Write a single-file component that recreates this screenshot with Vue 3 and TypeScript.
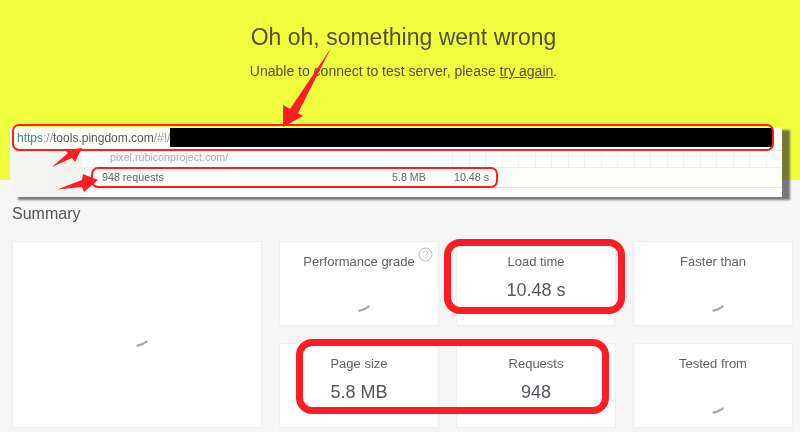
<script setup lang="ts">
interface Stat {
  label: string;
  value?: string;
  hint?: boolean;
}

const stats: Stat[] = [
  { label: "Performance grade", hint: true },
  { label: "Load time", value: "10.48 s" },
  { label: "Faster than" },
  { label: "Page size", value: "5.8 MB" },
  { label: "Requests", value: "948" },
  { label: "Tested from" },
];

const gridCells: number[] = Array.from({ length: 20 }, (_, i) => i);
</script>

<template>
  <div class="page">
    <header class="hero">
      <h1>Oh oh, something went wrong</h1>
      <p>Unable to connect to test server, please <a>try again</a>.</p>
    </header>

    <main class="content">
      <h2>Summary</h2>
      <section class="grid">
        <div class="card big">
          <svg class="spin" width="12" height="7" viewBox="0 0 12 7">
            <path d="M1.5 5.6 C4.5 5.3 7.5 4 10.5 1.6" />
          </svg>
        </div>
        <div v-for="s in stats" :key="s.label" class="card">
          <div class="label">
            {{ s.label }}
            <svg v-if="s.hint" class="hint" width="15" height="15" viewBox="0 0 15 15">
              <circle cx="7.5" cy="7.5" r="6.5" />
              <path d="M5.6 6 C5.6 3.6 9.5 3.6 9.5 6 C9.5 7.6 7.5 7.4 7.5 9" />
              <path d="M7.5 10.2 V11.4" />
            </svg>
          </div>
          <div v-if="s.value" class="value">{{ s.value }}</div>
          <svg v-else class="spin small" width="12" height="7" viewBox="0 0 12 7">
            <path d="M1.5 5.6 C4.5 5.3 7.5 4 10.5 1.6" />
          </svg>
        </div>
      </section>
    </main>

    <!-- pasted screenshot lying over the page -->
    <figure class="shot">
      <div class="url">
        <span class="scheme">https</span><span class="dim">://</span>tools.pingdom.com<span class="dim">/#!/</span>
        <span class="redacted"></span>
      </div>
      <div class="rows">
        <div class="side"></div>
        <div class="table">
          <div class="row-a">
            <span class="host">pixel.rubiconproject.com/</span>
            <div class="ticks">
              <i v-for="c in gridCells" :key="c"></i>
            </div>
          </div>
          <div class="row-b">
            <span class="req">948 requests</span>
            <span class="size">5.8 MB</span>
            <span class="time">10.48 s</span>
          </div>
        </div>
      </div>
    </figure>

    <!-- hand-drawn annotations -->
    <div class="mark m-url"></div>
    <div class="mark m-req"></div>
    <div class="mark thick m-load"></div>
    <div class="mark thick m-size"></div>
    <svg class="arrows" width="800" height="432" viewBox="0 0 800 432">
      <path d="M331 48 L298 113 L303 116 L283 127 L283 105 L290 109 Z" />
      <path d="M52 167 L68 153 L65 150 L82 148 L75 162 L72 158 Z" />
      <path d="M57 189.5 L82 180 L83 174 L98 180 L84 192 L82 187 Z" />
    </svg>
  </div>
</template>

<style>
html,
body {
  margin: 0;
}
</style>

<style scoped>
.page {
  position: relative;
  width: 800px;
  height: 432px;
  overflow: hidden;
  background: #f6f6f6;
  font-family: "Liberation Sans", Arial, sans-serif;
  color: #555;
  filter: blur(0.5px);
}

.hero {
  height: 180px;
  box-sizing: border-box;
  padding-top: 23px;
  background: #efff3e;
  text-align: center;
  color: #50522f;
}

.hero h1 {
  margin: 0;
  padding-left: 7px;
  font-size: 23px;
  line-height: 28px;
  font-weight: 400;
}

.hero p {
  margin: 12px 0 0;
  padding-left: 7px;
  font-size: 14px;
  line-height: 16px;
}

.hero a {
  text-decoration: underline;
}

.content {
  padding: 25px 7px 0 12px;
}

.content h2 {
  margin: 0;
  font-size: 16px;
  line-height: 18px;
  font-weight: 400;
  color: #555;
}

.grid {
  display: grid;
  grid-template-columns: 250px 160px 160px 160px;
  grid-template-rows: 85px 85px;
  column-gap: 17px;
  row-gap: 17px;
  margin-top: 18px;
}

.card {
  position: relative;
  display: flex;
  flex-direction: column;
  align-items: center;
  box-sizing: border-box;
  padding-top: 12px;
  background: #fff;
  border: 1px solid #eeeeee;
  border-radius: 2px;
}

.big {
  grid-row: span 2;
  justify-content: center;
  padding-top: 18px;
}

.label {
  position: relative;
  font-size: 13px;
  line-height: 15px;
  color: #62626a;
}

.hint {
  position: absolute;
  top: -7px;
  right: -18px;
  fill: none;
  stroke: #bdbdbd;
  stroke-width: 1;
}

.value {
  margin-top: 10px;
  font-size: 18px;
  line-height: 22px;
  color: #55555c;
}

.spin {
  margin-left: 9px;
  fill: none;
  stroke: #a9a9a9;
  stroke-width: 2.4;
  stroke-linecap: round;
}

.small {
  margin-top: 36px;
}

.shot {
  position: absolute;
  left: 10px;
  top: 127px;
  width: 772px;
  height: 70px;
  margin: 0;
  background: #fdfdf9;
  box-shadow: 8px 3px 2px rgba(50, 50, 50, 0.65);
}

.url {
  display: flex;
  align-items: center;
  box-sizing: border-box;
  height: 23px;
  padding: 0 0 2px 7px;
  font-size: 12px;
  color: #555;
  white-space: pre;
}

.scheme {
  color: #3f8f6c;
}

.dim {
  color: #999;
}

.redacted {
  position: absolute;
  left: 160px;
  right: 9px;
  top: 1px;
  height: 19px;
  background: #000;
}

.rows {
  display: flex;
  height: 47px;
  border-top: 1px solid #e2e2de;
  box-sizing: border-box;
}

.side {
  width: 72px;
  background: #f4f4f0;
}

.table {
  flex: 1;
  font-size: 10.7px;
}

.row-a {
  position: relative;
  height: 16px;
  border-bottom: 1px solid #eeeeea;
}

.host {
  position: absolute;
  left: 28px;
  top: 0;
  color: #aaa;
}

.ticks {
  position: absolute;
  right: 0;
  top: 2px;
  bottom: 0;
  display: flex;
}

.ticks i {
  display: block;
  box-sizing: border-box;
  width: 16.5px;
  border-left: 1px solid #f0f0ec;
}

.row-b {
  position: relative;
  height: 19px;
  border-bottom: 1px solid #e2e2e2;
  line-height: 18px;
  color: #666;
}

.req {
  position: absolute;
  left: 20px;
}

.size {
  position: absolute;
  left: 310px;
}

.time {
  position: absolute;
  left: 372px;
}

.mark {
  position: absolute;
  box-sizing: border-box;
  border: 2px solid #ff1d25;
  border-radius: 7px;
}

.thick {
  border-width: 7.5px;
  border-radius: 16px;
}

.m-url {
  left: 12px;
  top: 124px;
  width: 762px;
  height: 27px;
}

.m-req {
  left: 91px;
  top: 167px;
  width: 407px;
  height: 21px;
}

.m-load {
  left: 444px;
  top: 239px;
  width: 181px;
  height: 75px;
}

.m-size {
  left: 296px;
  top: 339px;
  width: 313px;
  height: 75px;
}

.arrows {
  position: absolute;
  left: 0;
  top: 0;
  fill: #ff1d25;
}
</style>
